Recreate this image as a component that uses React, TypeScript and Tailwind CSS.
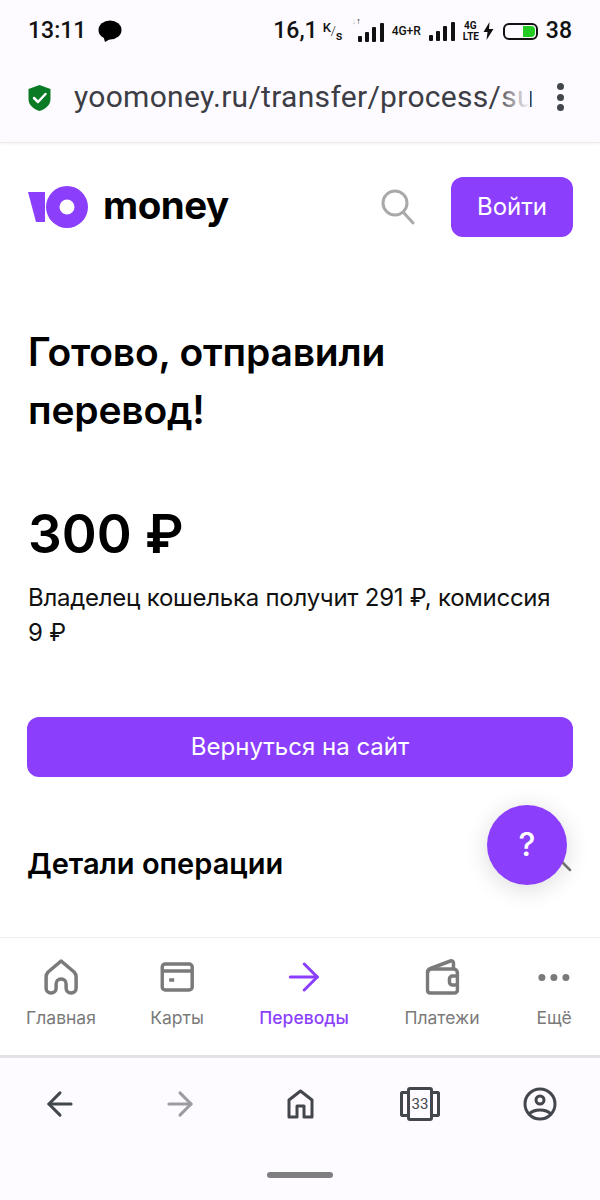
import { ArrowLeft, ArrowRight } from 'lucide-react'

const sans = 'font-["Inter","Noto_Sans",sans-serif]'
const roboto = 'font-["Roboto","Noto_Sans",sans-serif]'

function Bars({ className }: { className?: string }) {
  return (
    <svg className={className} width="26" height="19" viewBox="0 0 26 19" fill="#111">
      <rect x="0" y="13" width="4" height="6" rx="1" />
      <rect x="7" y="9" width="4" height="10" rx="1" />
      <rect x="14" y="4" width="4" height="15" rx="1" />
      <rect x="22" y="0" width="4" height="19" rx="1" />
    </svg>
  )
}

function StatusBar() {
  return (
    <div className={`flex h-[62px] items-center justify-between pl-7 pr-7 text-[#111] ${roboto}`}>
      <div className="flex items-center gap-[12px]">
        <span className="text-[23px] font-medium">13:11</span>
        <svg width="24" height="23" viewBox="0 0 24 23" fill="#000">
          <ellipse cx="12" cy="10" rx="11.500" ry="9.500" />
          <path d="M5 15l2 7 7-4z" />
        </svg>
      </div>
      <div className="flex items-center">
        <span className="text-[23px] font-medium">16,1</span>
        <span className="relative ml-[5px] h-[20px] w-[20px] text-[13px] leading-none font-medium">
          <span className="absolute top-0 left-0">K</span>
          <span className="absolute top-[3px] left-[8px] font-light">/</span>
          <span className="absolute top-[8px] left-[13px]">s</span>
        </span>
        <div className="relative ml-[15px]">
          <span className="absolute -top-[3px] -left-[6px] text-[9px] leading-none font-bold">
            <span className="text-[#bbb]">↓</span>↑
          </span>
          <Bars className="mt-[3px]" />
        </div>
        <span className="ml-[8px] text-[12px] font-medium">4G+R</span>
        <Bars className="ml-[8px]" />
        <span className="ml-[8px] flex w-[15px] flex-col text-center text-[10px] leading-[11px] font-bold">
          <span>4G</span>
          <span>LTE</span>
        </span>
        <svg className="ml-[5px]" width="11" height="18" viewBox="0 0 10 18" fill="#111">
          <path d="M6 0L0 10h4l-1 8 7-11H5.500z" />
        </svg>
        <div className="ml-[9px] flex h-[17px] w-[35px] justify-end rounded-[6px] border-[2px] border-[#111] p-[1px]">
          <div className="w-[12px] rounded-r-[4px] bg-[#22cc22]" />
        </div>
        <span className="ml-[8px] text-[23px] font-medium">38</span>
      </div>
    </div>
  )
}

function UrlBar() {
  return (
    <div className="flex h-[81px] items-start justify-between border-b border-[#ececec] pl-7 pr-[36px] pt-[17px]">
      <div className="flex min-w-0 items-center">
        <svg width="23" height="28" viewBox="0 0 23 28">
          <path d="M11.500 1L22.500 5v10c0 6-5 10-11 12C5.500 25 .5 21 .5 15V5z" fill="#0b7a24" />
          <path d="M6 14l4 4 7.500-8" fill="none" stroke="#fff" strokeWidth="2.500" strokeLinecap="round" strokeLinejoin="round" />
        </svg>
        <div className="relative ml-[23px] h-[38px] w-[456px]">
          <span className={`block text-[30px] leading-9 tracking-[.3px] whitespace-nowrap text-[#3c3d45] ${roboto}`}>
            yoomoney.ru/transfer/process/su
          </span>
          <div className="absolute inset-y-0 right-0 w-[34px] bg-gradient-to-r from-transparent to-[#fdfbff]" />
        </div>
      </div>
      <div className="flex flex-col gap-[3.500px] pt-[4px]">
        <span className="size-[7px] rounded-full bg-[#44464e]" />
        <span className="size-[7px] rounded-full bg-[#44464e]" />
        <span className="size-[7px] rounded-full bg-[#44464e]" />
      </div>
    </div>
  )
}

function SiteHeader() {
  return (
    <div className="flex items-center justify-between pl-7 pr-[27px] pt-[34px]">
      <div className="flex items-center">
        <svg width="60" height="42" viewBox="0 0 60 42">
          <path d="M0 6h17v30H8z" fill="#8b3ffd" />
          <path fillRule="evenodd" d="M39 0a21 21 0 1 1 0 42 21 21 0 0 1 0-42zm0 13.500a7.500 7.500 0 1 0 0 15 7.500 7.500 0 0 0 0-15z" fill="#8b3ffd" />
        </svg>
        <span className={`ml-[15px] pb-[4px] text-[38.500px] leading-none font-bold tracking-[-.5px] text-black ${sans}`}>money</span>
      </div>
      <div className="flex items-center">
        <svg width="34" height="36" viewBox="0 0 34 36" fill="none" stroke="#a9a9a9" strokeWidth="3">
          <circle cx="14" cy="14" r="12" />
          <path d="M23 24l9 10" strokeLinecap="round" />
        </svg>
        <button className={`ml-[36px] h-[60px] w-[122px] rounded-[12px] bg-[#8b3ffd] text-[24px] text-white ${sans}`} type="button">
          Войти
        </button>
      </div>
    </div>
  )
}

function Receipt() {
  return (
    <div className={`relative flex-1 px-7 ${sans}`}>
      <h1 className="mt-[86px] text-[39px] leading-[58px] font-semibold tracking-[-.2px] text-black">
        Готово, отправили
        <br />
        перевод!
      </h1>
      <div className="mt-[60px] text-[53px] leading-[70px] font-semibold text-black">300 ₽</div>
      <p className="mt-[11px] w-[540px] text-[24px] leading-[35px] tracking-[-.25px] text-[#111]">
        Владелец кошелька получит 291 ₽, комиссия 9{'\u00a0'}₽
      </p>
      <button className="mt-[67px] -ml-px h-[60px] w-[546px] rounded-[12px] bg-[#8b3ffd] text-[24px] text-white" type="button">
        Вернуться на сайт
      </button>
      <div className="mt-[56px] flex items-center justify-between pr-0">
        <h2 className="-ml-px text-[29px] leading-[62px] font-semibold text-black">Детали операции</h2>
        <svg className="mt-[4px]" width="12" height="12" viewBox="0 0 12 12" fill="none" stroke="#777" strokeWidth="2.500">
          <path d="M1 1l9 9" strokeLinecap="round" />
        </svg>
      </div>
      <button
        className="absolute top-[568px] left-[487px] flex size-20 items-center justify-center rounded-full bg-[#8b3ffd] text-[32px] font-medium text-white shadow-[0_4px_24px_rgba(0,0,0,.14)]"
        type="button"
      >
        ?
      </button>
    </div>
  )
}

function TabItem({ label, active, icon, className }: { label: string; active?: boolean; icon: React.ReactNode; className: string }) {
  return (
    <div className={`absolute top-0 flex -translate-x-1/2 flex-col items-center ${className}`}>
      <div className="flex h-[44px] items-center">{icon}</div>
      <span className={`mt-[7px] text-[17.500px] leading-6 whitespace-nowrap ${active ? 'font-medium text-[#8b3ffd]' : 'text-[#7a7a7a]'}`}>
        {label}
      </span>
    </div>
  )
}

function TabBar() {
  return (
    <nav className={`relative h-[118px] border-t border-[#f0f0f0] bg-white pt-[17px] ${sans}`}>
      <div className="relative">
        <TabItem
          className="left-[61px]"
          label="Главная"
          icon={
            <svg width="34" height="36" viewBox="0 0 34 36" fill="none" stroke="#7a7a7a" strokeWidth="3.500" strokeLinejoin="round">
              <path d="M17 2L4 13c-1.500 1.500-2 3-2 5v11c0 3 2 5 5 5s5-2 5-5v-4c0-3 2-5 5-5s5 2 5 5v4c0 3 2 5 5 5s5-2 5-5V18c0-2-.5-3.500-2-5z" />
            </svg>
          }
        />
        <TabItem
          className="left-[177px]"
          label="Карты"
          icon={
            <svg width="34" height="30" viewBox="0 0 34 30" fill="none" stroke="#7a7a7a" strokeWidth="3.500">
              <rect x="2" y="2" width="30" height="26" rx="3" />
              <path d="M2 9h30" />
              <path d="M9 18h5" />
            </svg>
          }
        />
        <TabItem
          className="left-[304px]"
          label="Переводы"
          active
          icon={
            <svg width="32" height="30" viewBox="0 0 32 30" fill="none" stroke="#8b3ffd" strokeWidth="3" strokeLinecap="round" strokeLinejoin="round">
              <path d="M2 15h27" />
              <path d="M16 2l13 13-13 13" />
            </svg>
          }
        />
        <TabItem
          className="left-[442px]"
          label="Платежи"
          icon={
            <svg width="34" height="36" viewBox="0 0 34 36" fill="none" stroke="#7a7a7a" strokeWidth="3.500" strokeLinejoin="round">
              <path d="M2 14c0-2 1-3.500 3-4.500L25 2c1.500-.5 3 .5 3 2v6" />
              <path d="M2 14c0-2.500 1.500-4 4-4h22c2 0 4 1.500 4 4v17c0 2-1.500 3-3 3H5c-2 0-3-1-3-3z" />
              <path d="M32 17h-5c-1.500 0-3 1-3 3v3c0 2 1.500 3 3 3h5" />
            </svg>
          }
        />
        <TabItem
          className="left-[554px]"
          label="Ещё"
          icon={
            <div className="flex gap-[5px]">
              <span className="size-[7px] rounded-full bg-[#7a7a7a]" />
              <span className="size-[7px] rounded-full bg-[#7a7a7a]" />
              <span className="size-[7px] rounded-full bg-[#7a7a7a]" />
            </div>
          }
        />
      </div>
    </nav>
  )
}

function BrowserBar() {
  return (
    <div className="flex-none border-t-[3px] border-[#e2e2e4] bg-[#fdfbff]">
      <div className="grid h-[142px] grid-cols-5 px-0 pt-[27px]">
        <div className="flex h-[38px] items-center justify-center">
          <ArrowLeft size={38} strokeWidth={1.900} color="#44464e" />
        </div>
        <div className="flex h-[38px] items-center justify-center">
          <ArrowRight size={38} strokeWidth={1.900} color="#9c9ba0" />
        </div>
        <div className="flex h-[38px] items-center justify-center">
          <svg width="27" height="30" viewBox="0 0 27 30" fill="none" stroke="#44464e" strokeWidth="3" strokeLinejoin="round">
            <path d="M13.500 2L2 11v17h8V17h7v11h8V11z" />
          </svg>
        </div>
        <div className="flex h-[38px] items-center justify-center">
          <div className="flex items-center">
            <span className="h-[26px] w-[7px] rounded-l-[3px] border-[3px] border-r-0 border-[#44464e]" />
            <span className={`flex h-[34px] w-[26px] items-center justify-center rounded-[3px] border-[3px] border-[#44464e] text-[15px] text-[#44464e] ${roboto}`}>
              33
            </span>
            <span className="h-[26px] w-[7px] rounded-r-[3px] border-[3px] border-l-0 border-[#44464e]" />
          </div>
        </div>
        <div className="flex h-[38px] items-center justify-center">
          <svg width="34" height="34" viewBox="0 0 34 34" fill="none" stroke="#44464e" strokeWidth="3">
            <circle cx="17" cy="17" r="15" />
            <circle cx="17" cy="13" r="4" />
            <path d="M6 27c3-3 7-4 11-4s8 1 11 4" />
          </svg>
        </div>
      </div>
    </div>
  )
}

export default function App() {
  return (
    <div className="relative flex h-[1200px] w-[600px] flex-col overflow-hidden bg-white">
      <div className="flex-none bg-[#fdfbff] shadow-[0_1px_3px_rgba(0,0,0,.06)]">
        <StatusBar />
        <UrlBar />
      </div>
      <SiteHeader />
      <Receipt />
      <TabBar />
      <BrowserBar />
      <div className="absolute top-[1172px] left-[267px] h-[6px] w-[66px] rounded-[3px] bg-[#7e7e80]" />
    </div>
  )
}
